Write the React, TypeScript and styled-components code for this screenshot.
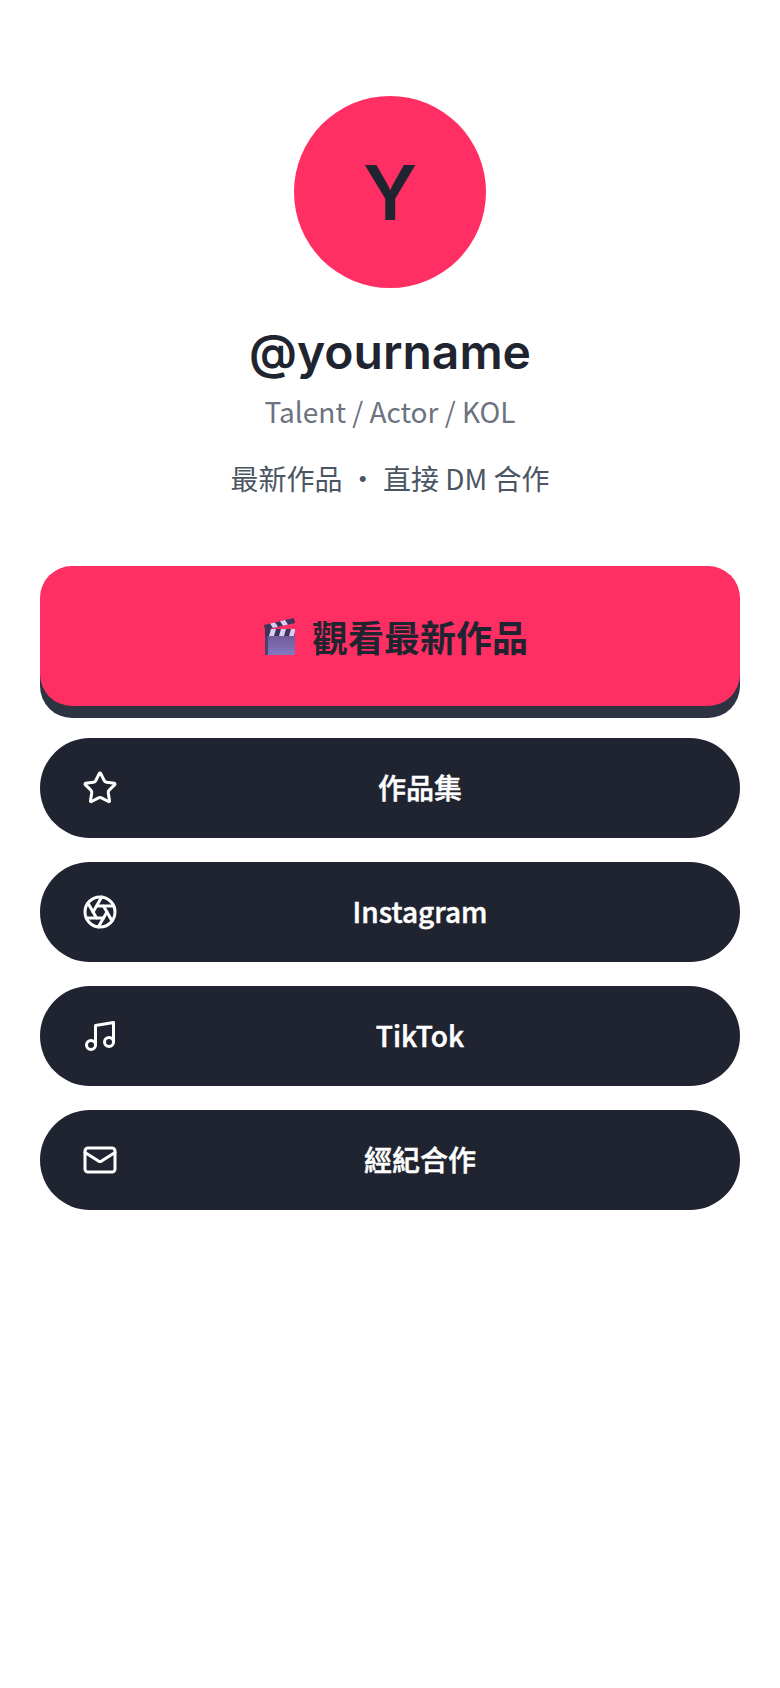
import * as React from 'react'
import styled, { createGlobalStyle } from 'styled-components'
import { Aperture, Mail, Music, Star } from 'lucide-react'

const LINKS = [
  { label: '作品集', icon: Star },
  { label: 'Instagram', icon: Aperture },
  { label: 'TikTok', icon: Music },
  { label: '經紀合作', icon: Mail },
]

function Clapper() {
  return (
    <svg width="36" height="38" viewBox="0 0 36 38">
      <defs>
        <linearGradient id="clapBody" x1="0" y1="0" x2="0" y2="1">
          <stop offset="0" stopColor="#6f5a96" />
          <stop offset="1" stopColor="#8478c0" />
        </linearGradient>
      </defs>
      <rect x="3" y="18" width="30" height="20" rx="1" fill="url(#clapBody)" />
      <rect x="3" y="14" width="3" height="24" fill="#4a4170" />
      <rect x="3" y="12" width="30" height="7" fill="#3d3557" />
      <path d="M9 12h5l-2 7H7zM19 12h5l-2 7h-5zM29 12h4v2l-1 5h-5z" fill="#d9cdf5" />
      <path d="M2 8 32 1l1 5L3 13z" fill="#3d3557" />
      <path d="M8 6.600l5-1.200 3 4.400-5 1.200zM18 4.300l5-1.200 3 4.400-5 1.200z" fill="#d9cdf5" />
    </svg>
  )
}

export default function App() {
  return (
    <>
      <GlobalStyle />
      <Page>
        <Avatar>Y</Avatar>
        <Handle>@yourname</Handle>
        <Role>Talent / Actor / KOL</Role>
        <Tagline>最新作品 ・ 直接 DM 合作</Tagline>
        <Links>
          <PrimaryLink href="#">
            <Clapper />
            觀看最新作品
          </PrimaryLink>
          {LINKS.map(({ label, icon: Icon }) => (
            <LinkRow href="#" key={label}>
              <Icon size={36} strokeWidth={2} />
              <LinkLabel>{label}</LinkLabel>
            </LinkRow>
          ))}
        </Links>
      </Page>
    </>
  )
}

const GlobalStyle = createGlobalStyle`
  body {
    margin: 0;
    background: #fff;
    font-family: 'Noto Sans CJK TC', 'Noto Sans', sans-serif;
  }
`

const Page = styled.main`
  display: flex;
  flex-direction: column;
  align-items: center;
  min-height: 1688px;
  box-sizing: border-box;
  padding: 96px 40px 0;
`

const Avatar = styled.div`
  display: flex;
  align-items: center;
  justify-content: center;
  width: 192px;
  height: 192px;
  border-radius: 50%;
  background: #ff2e63;
  color: #1f2430;
  font-family: 'Inter', sans-serif;
  font-size: 76px;
  font-weight: 600;
`

const Handle = styled.h1`
  margin: 34px 0 0;
  color: #1f2430;
  font-family: 'Inter', sans-serif;
  font-size: 48px;
  line-height: 60px;
  font-weight: 600;
`

const Role = styled.p`
  margin: 7px 0 0;
  color: #6b7280;
  font-size: 28px;
  line-height: 44px;
`

const Tagline = styled.p`
  margin: 23px 0 0;
  color: #4b5563;
  font-size: 28px;
  line-height: 44px;
`

const Links = styled.nav`
  display: flex;
  flex-direction: column;
  gap: 24px;
  width: 100%;
  margin-top: 66px;
`

const PrimaryLink = styled.a`
  display: flex;
  align-items: center;
  justify-content: center;
  gap: 14px;
  height: 140px;
  margin-bottom: 8px;
  padding-left: 10px;
  border-radius: 32px;
  background: #ff2e63;
  box-shadow: 0 12px 0 #2d3340;
  color: #1f2430;
  font-size: 36px;
  font-weight: 700;
  text-decoration: none;
`

const LinkRow = styled.a`
  display: flex;
  align-items: center;
  gap: 22px;
  height: 100px;
  padding: 0 40px 0 42px;
  border-radius: 50px;
  background: #1f2430;
  color: #fff;
  text-decoration: none;
  flex-shrink: 0;
`

const LinkLabel = styled.span`
  flex: 1;
  padding-bottom: 2px;
  text-align: center;
  font-size: 28px;
  font-weight: 500;
  -webkit-text-stroke: 0.5px #fff;
`
